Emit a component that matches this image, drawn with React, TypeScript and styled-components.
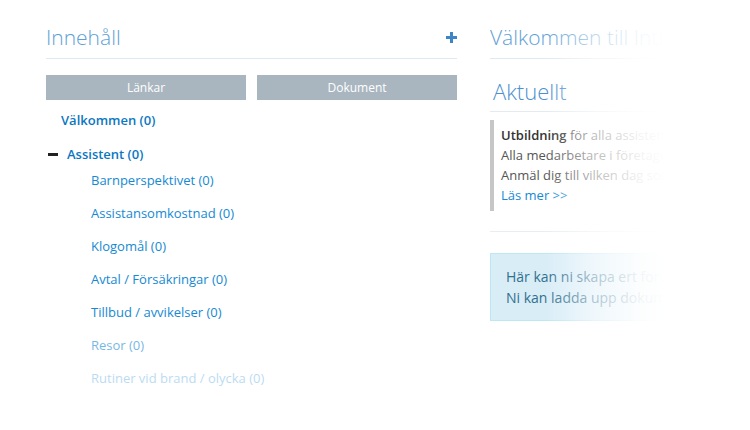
import styled, { createGlobalStyle } from "styled-components";

const GlobalStyle = createGlobalStyle`
  html, body {
    margin: 0;
    padding: 0;
    background: #fff;
    overflow: hidden;
  }
  body {
    font-family: "Open Sans", "Liberation Sans", sans-serif;
  }
`;

const Page = styled.div`
  display: flex;
  gap: 33px;
  padding: 22px 0 0 46px;
  width: 750px;
  height: 430px;
  box-sizing: border-box;
`;

const LeftColumn = styled.section`
  width: 411px;
  flex: none;
`;

const RightColumn = styled.section`
  position: relative;
  flex: 1;
  overflow: hidden;
`;

// white fade over the right column, as in the reference
const Fade = styled.div`
  position: absolute;
  inset: 0;
  pointer-events: none;
  background: linear-gradient(
    to right,
    rgba(255, 255, 255, 0) 55px,
    rgba(255, 255, 255, 0.6) 105px,
    rgba(255, 255, 255, 0.92) 150px,
    #fff 175px
  );
`;

const PanelHeader = styled.header`
  display: flex;
  justify-content: space-between;
  align-items: center;
  padding-bottom: 6px;
  border-bottom: 1px solid #dfe9f1;
  width: 411px;
`;

const PanelTitle = styled.h2`
  margin: 0;
  font-weight: 300;
  font-size: 21px;
  line-height: 30px;
  color: #5e9fd6;
  white-space: nowrap;
`;

const AddButton = styled.button`
  border: 0;
  background: none;
  padding: 0;
  width: 11px;
  height: 11px;
  display: flex;
  cursor: pointer;
`;

const Tabs = styled.div`
  display: grid;
  grid-template-columns: 1fr 1fr;
  gap: 11px;
  margin-top: 16px;
`;

const TabButton = styled.button`
  height: 25px;
  border: 0;
  background: #a9b6bf;
  color: #fff;
  font-family: inherit;
  font-size: 12px;
  cursor: pointer;
`;

const Tree = styled.ul`
  list-style: none;
  margin: 10px 0 0;
  padding: 0;
`;

const RootItem = styled.li<{ $indent: number }>`
  display: flex;
  align-items: center;
  gap: 9px;
  padding-left: ${(p) => p.$indent}px;
  margin-bottom: 14px;
  line-height: 20px;
  &:last-child {
    margin-bottom: 0;
  }
`;

const RootLink = styled.a`
  font-size: 13px;
  font-weight: 600;
  color: #0b77c2;
  text-decoration: none;
  cursor: pointer;
`;

const Collapse = styled.span`
  width: 10px;
  height: 3px;
  background: #222;
`;

const SubTree = styled.ul`
  list-style: none;
  margin: 6px 0 0;
  padding: 0 0 0 45px;
  display: flex;
  flex-direction: column;
  gap: 13px;
`;

const SubItem = styled.li<{ $dim?: number }>`
  line-height: 20px;
  font-size: 13px;
  color: #1689d3;
  opacity: ${(p) => p.$dim ?? 1};
  cursor: pointer;
`;

const SectionTitle = styled.h3`
  margin: 16px 0 0;
  padding: 0 0 3px 3px;
  font-weight: 300;
  font-size: 22px;
  line-height: 33px;
  color: #4d90cf;
  border-bottom: 1px solid #e4ebf0;
  width: 408px;
`;

const NewsCard = styled.article`
  margin-top: 8px;
  border-left: 4px solid #c6c6c6;
  padding: 5px 0 6px 7px;
  font-size: 13px;
  line-height: 20px;
  color: #555;
  white-space: nowrap;
`;

const NewsLine = styled.div``;

const Strong = styled.b`
  font-weight: 600;
  color: #333;
`;

const ReadMore = styled.a`
  color: #1689d3;
  text-decoration: none;
  cursor: pointer;
`;

const Divider = styled.hr`
  margin: 20px 0 0;
  border: 0;
  border-top: 1px solid #e8eef2;
  width: 411px;
`;

const InfoBox = styled.div`
  margin-top: 21px;
  width: 240px;
  padding: 12px 15px;
  box-sizing: border-box;
  border: 1px solid #bce8f1;
  border-right: 0;
  background: #d9edf7;
  color: #31708f;
  font-size: 14px;
  line-height: 21px;
  white-space: nowrap;
  overflow: hidden;
`;

const children: { label: string; dim?: number }[] = [
  { label: "Barnperspektivet (0)" },
  { label: "Assistansomkostnad (0)" },
  { label: "Klogomål (0)" },
  { label: "Avtal / Försäkringar (0)" },
  { label: "Tillbud / avvikelser (0)" },
  { label: "Resor (0)", dim: 0.6 },
  { label: "Rutiner vid brand / olycka (0)", dim: 0.3 },
];

export default function App() {
  return (
    <>
      <GlobalStyle />
      <Page>
        <LeftColumn>
          <PanelHeader>
            <PanelTitle>Innehåll</PanelTitle>
            <AddButton aria-label="Lägg till">
              <svg width="11" height="11" viewBox="0 0 11 11">
                <rect x="4" y="0" width="3" height="11" fill="#3d85c6" />
                <rect x="0" y="4" width="11" height="3" fill="#3d85c6" />
              </svg>
            </AddButton>
          </PanelHeader>
          <Tabs>
            <TabButton>Länkar</TabButton>
            <TabButton>Dokument</TabButton>
          </Tabs>
          <Tree>
            <RootItem $indent={15}>
              <RootLink>Välkommen (0)</RootLink>
            </RootItem>
            <RootItem $indent={2}>
              <Collapse />
              <RootLink>Assistent (0)</RootLink>
            </RootItem>
          </Tree>
          <SubTree>
            {children.map((c) => (
              <SubItem key={c.label} $dim={c.dim}>
                {c.label}
              </SubItem>
            ))}
          </SubTree>
        </LeftColumn>
        <RightColumn>
          <PanelHeader>
            <PanelTitle>Välkommen till Intra</PanelTitle>
          </PanelHeader>
          <SectionTitle>Aktuellt</SectionTitle>
          <NewsCard>
            <NewsLine>
              <Strong>Utbildning</Strong> för alla assistenter
            </NewsLine>
            <NewsLine>Alla medarbetare i företaget</NewsLine>
            <NewsLine>Anmäl dig till vilken dag som</NewsLine>
            <NewsLine>
              <ReadMore>Läs mer &gt;&gt;</ReadMore>
            </NewsLine>
          </NewsCard>
          <Divider />
          <InfoBox>
            Här kan ni skapa ert forum
            <br />
            Ni kan ladda upp dokument
          </InfoBox>
          <Fade />
        </RightColumn>
      </Page>
    </>
  );
}
